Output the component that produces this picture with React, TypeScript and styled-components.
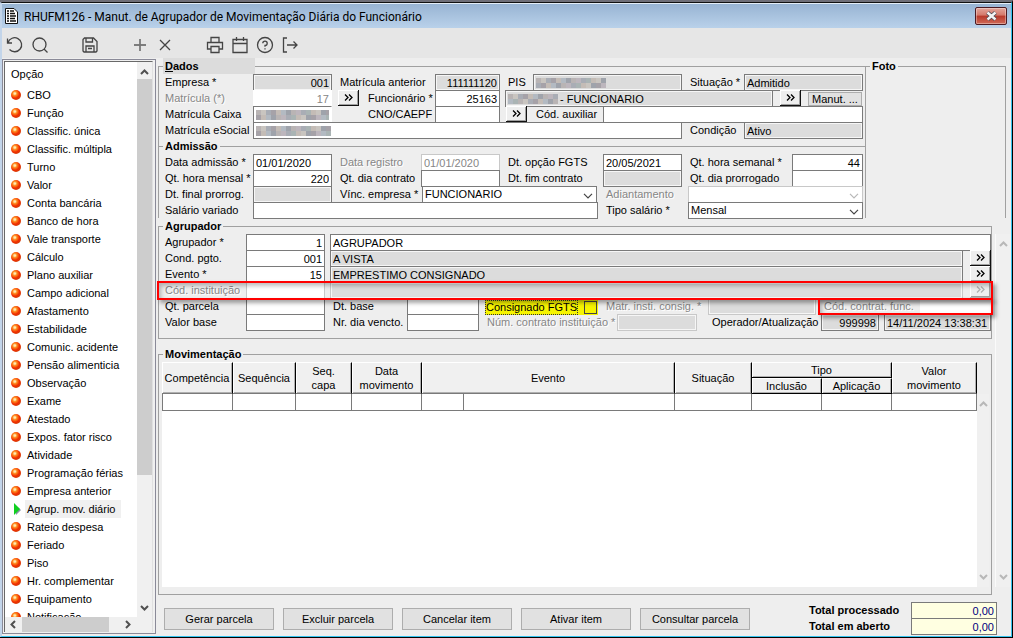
import React from "react";
import styled, { createGlobalStyle, css } from "styled-components";

const LINE = "#a0a0a0";
const EDGE = "#7a7a7a";
const FACE = "#eeeeee";
const SHADE = "#dcdcdc";
const MUTED = "#868686";

const GlobalStyle = createGlobalStyle`
  * { box-sizing: border-box; }
  html, body, #root { height: 100%; }
  body {
    margin: 0;
    background: ${FACE};
    color: #000;
    font: 11px/16px "Liberation Sans", Arial, sans-serif;
    overflow: hidden;
  }
  input, select, button { font: inherit; color: inherit; margin: 0; }
  fieldset { margin: 0; padding: 0; min-width: 0; border: 1px solid ${LINE}; }
`;

const Window = styled.div`
  display: flex;
  flex-direction: column;
  height: 100%;
  border-top: 2px solid #6f6f78;
  border-right: 1px solid #000;
  border-bottom: 1px solid #000;
`;

const Frame = styled.div`
  flex: 1;
  min-height: 0;
  display: flex;
  flex-direction: column;
  border-top: 1px solid #111;
  border-left: 2px solid #c3d5ea;
  border-right: 1px solid #35c3ee;
  border-bottom: 1px solid #35c3ee;
`;

const TitleBar = styled.header`
  display: flex;
  align-items: center;
  height: 25px;
  padding: 0 4px 0 3px;
  gap: 6px;
  border-top: 1px solid #e4eef8;
  background: linear-gradient(#98b4d3, #b9d1ea);
`;

const Title = styled.h1`
  flex: 1;
  margin: 0;
  padding-top: 2px;
  font: 12px/20px Roboto, "Noto Sans", sans-serif;
`;

const CloseButton = styled.button`
  display: grid;
  place-items: center;
  width: 32px;
  height: 18px;
  padding: 0;
  border: 1px solid #4c1a22;
  border-radius: 2px;
  background: linear-gradient(#e3a59b 0%, #d4786a 45%, #b8382a 50%, #cf6a58 100%);
  box-shadow: inset 0 0 0 1px rgba(255, 255, 255, 0.35);
`;

const Toolbar = styled.nav`
  display: flex;
  align-items: center;
  height: 30px;
  padding-top: 4px;
  background: #e6e6e6;
`;

const ToolButton = styled.button<{ $lead?: boolean }>`
  display: grid;
  place-items: center;
  width: 25px;
  height: 26px;
  margin-left: ${(p) => (p.$lead ? "25px" : "0")};
  padding: 0;
  border: 0;
  background: none;
  color: #444;
`;

const Body = styled.div`
  flex: 1;
  min-height: 0;
  display: flex;
`;

const Sidebar = styled.aside`
  display: flex;
  flex-direction: column;
  flex: none;
  width: 154px;
  margin: 1px 0 2px;
  padding: 1px;
  border: 1px solid #8a8a98;
  background: #f0f0f0;
`;

const SidebarInner = styled.div`
  flex: 1;
  min-height: 0;
  display: flex;
  margin-right: 1px;
  border-left: 1px solid #696969;
  border-top: 1px solid #696969;
  border-right: 1px solid #e0e0e0;
`;

const ListColumn = styled.div`
  flex: 1;
  min-width: 0;
  display: flex;
  flex-direction: column;
`;

const ListView = styled.div`
  flex: 1;
  min-height: 0;
  overflow: hidden;
  padding: 3px 0 0 6px;
  background: #fff;
`;

const ListTitle = styled.h2`
  margin: 0 0 3px;
  font: inherit;
  line-height: 18px;
`;

const OptionList = styled.ul`
  margin: 0;
  padding: 0;
  list-style: none;
`;

const Option = styled.li`
  display: flex;
  align-items: center;
  height: 18px;
  gap: 3px;
`;

const OptionLink = styled.a<{ $active?: boolean }>`
  padding: 0 6px 0 2px;
  line-height: 18px;
  color: #000;
  text-decoration: none;
  white-space: nowrap;
  background: ${(p) => (p.$active ? "#f0f0f0" : "none")};
`;

const Bullet = styled.span`
  flex: none;
  width: 10px;
  height: 10px;
  margin-right: 1px;
  border-radius: 50%;
  background: radial-gradient(circle at 38% 35%, #ffe9b0 0 8%, #ff8a1c 24%, #f02c00 52%, #c84a10 85%, #e8a060 100%);
`;

const Marker = styled.svg`
  flex: none;
  width: 11px;
  height: 12px;
`;

const VerticalBar = styled.div<{ $wide?: boolean; $corner?: boolean }>`
  flex: none;
  display: flex;
  flex-direction: column;
  align-items: center;
  justify-content: space-between;
  width: ${(p) => (p.$wide ? "15px" : "12px")};
  padding: 6px 0 ${(p) => (p.$corner ? "20px" : "6px")};
  gap: 2px;
  background: #f0f0f0;
`;

const VerticalThumb = styled.span`
  width: 100%;
  flex: 396;
  background: #cdcdcd;
`;

const VerticalTrack = styled.span`
  flex: 124;
`;

const HorizontalBar = styled.div`
  flex: none;
  display: flex;
  align-items: center;
  height: 15px;
  padding: 0 5px 0 4px;
  gap: 4px;
  background: #f0f0f0;
`;

const HorizontalThumb = styled.span`
  flex: 1;
  height: 100%;
  margin-right: 10px;
  background: #cdcdcd;
`;

const Main = styled.main`
  flex: 1;
  min-width: 0;
  display: flex;
  flex-direction: column;
  padding-left: 2px;
`;

const TopArea = styled.div`
  display: flex;
  padding-right: 5px;
`;

const DataGroup = styled.fieldset`
  flex: 1;
  border-bottom: 0;
`;

const PhotoGroup = styled.fieldset`
  flex: none;
  width: 140px;
  border-left: 0;
  border-bottom: 0;
`;

const Legend = styled.legend<{ $shaded?: boolean }>`
  height: 16px;
  margin-left: 4px;
  padding: 0 2px;
  width: ${(p) => (p.$shaded ? "92px" : "auto")};
  font-weight: bold;
  background: ${(p) => (p.$shaded ? SHADE : FACE)};
`;

const Divider = styled.h2`
  display: flex;
  align-items: center;
  gap: 2px;
  height: 16px;
  margin: 0;
  font: bold 11px/16px "Liberation Sans", Arial, sans-serif;
  &::before, &::after {
    content: "";
    height: 1px;
    background: ${LINE};
  }
  &::before { width: 4px; }
  &::after { flex: 1; }
`;

const Row = styled.div`
  position: relative;
  display: flex;
  align-items: flex-start;
  height: 16px;
  padding: 0 2px 0 6px;
`;

const Label = styled.label<{ $w: number; $muted?: boolean }>`
  flex: none;
  width: ${(p) => p.$w}px;
  white-space: nowrap;
  ${(p) => p.$muted && css`
    color: ${MUTED};
    text-shadow: 1px 1px #fff;
  `}
`;

const Gap = styled.span<{ $w: number }>`
  flex: none;
  width: ${(p) => p.$w}px;
`;

type Kind = "edit" | "shade" | "mutedEdit" | "mutedShade" | "bare";

const Input = styled.input<{ $w?: number; $kind: Kind; $right?: boolean }>`
  flex: ${(p) => (p.$w ? "none" : "1")};
  width: ${(p) => (p.$w ? `${p.$w}px` : "0")};
  min-width: 0;
  height: 17px;
  padding: 1px 2px 0;
  border: 1px solid ${(p) => (p.$kind.startsWith("muted") ? "#c8c8c8" : EDGE)};
  border-radius: 0;
  outline: 0;
  text-align: ${(p) => (p.$right ? "right" : "left")};
  background: ${(p) => (p.$kind === "shade" || p.$kind === "mutedShade" ? SHADE : "#fff")};
  box-shadow: inset 0 0 0 1px ${(p) => (p.$kind.endsWith("hade") ? "#f6f6f6" : "#fff")};
  color: ${(p) => (p.$kind.startsWith("muted") || p.$kind === "bare" ? MUTED : "#000")};
  ${(p) => p.$kind === "bare" && css`border-color: #fff;`}
`;

const Masked = styled.div<{ $w?: number; $shade?: boolean; $bare?: boolean }>`
  flex: ${(p) => (p.$w ? "none" : "1")};
  width: ${(p) => (p.$w ? `${p.$w}px` : "0")};
  display: flex;
  align-items: center;
  gap: 2px;
  height: 17px;
  padding: 0 2px;
  border: 1px solid ${EDGE};
  border-right-color: ${(p) => (p.$bare ? "#fff" : EDGE)};
  background: ${(p) => (p.$shade ? SHADE : "#fff")};
  box-shadow: inset 0 0 0 1px ${(p) => (p.$shade ? "#f6f6f6" : "#fff")};
  white-space: nowrap;
`;

const Select = styled.select<{ $muted?: boolean }>`
  appearance: none;
  flex: 1;
  width: 0;
  height: 17px;
  padding: 0 2px 1px;
  border: 1px solid ${(p) => (p.$muted ? "#c8c8c8" : EDGE)};
  border-radius: 0;
  outline: 0;
  background: #fff;
  line-height: 14px;
  opacity: 1;
`;

const SelectBox = styled.span<{ $w?: number }>`
  position: relative;
  display: flex;
  flex: ${(p) => (p.$w ? "none" : "1")};
  width: ${(p) => (p.$w ? `${p.$w}px` : "auto")};
  svg {
    position: absolute;
    right: 4px;
    top: 7px;
    pointer-events: none;
  }
`;

const LookupButton = styled.button<{ $muted?: boolean }>`
  flex: none;
  display: grid;
  place-items: center;
  width: 21px;
  height: 16px;
  padding: 0;
  border: 0;
  border-right: 1px solid #111;
  border-bottom: 1px solid #111;
  background: ${FACE};
  box-shadow: inset 1px 1px #fff, inset -1px -1px #a0a0a0;
  ${(p) => p.$muted && css`border-color: #b8b8b8;`}
`;

const FlatButton = styled.button<{ $w: number }>`
  flex: none;
  width: ${(p) => p.$w}px;
  height: 14px;
  margin-top: 2px;
  padding: 0;
  border: 1px solid #adadad;
  background: #e1e1e1;
  line-height: 12px;
`;

const Lower = styled.div`
  flex: 1;
  min-height: 0;
  display: flex;
  gap: 4px;
`;

const Groups = styled.div`
  flex: 1;
  min-width: 0;
  display: flex;
  flex-direction: column;
  gap: 7px;
`;

const OuterScroll = styled.div`
  display: flex;
  margin: 16px 0 8px;
  border-left: 1px solid #fafafa;
  margin-left: -1px;
`;

const GroupBox = styled.fieldset`
  padding-bottom: 8px;
  ${Row} { padding-right: 0; }
`;

const Callout = styled.span<{ $inner?: boolean }>`
  position: absolute;
  z-index: 2;
  top: ${(p) => (p.$inner ? "0" : "-1px")};
  bottom: ${(p) => (p.$inner ? "-1px" : "-2px")};
  right: -2px;
  left: ${(p) => (p.$inner ? "auto" : "-2px")};
  width: ${(p) => (p.$inner ? "175px" : "auto")};
  border: 2px solid #f00;
  box-shadow: 3px 3px 4px rgba(0, 0, 0, 0.35), inset 2px 3px 4px rgba(0, 0, 0, 0.25);
  pointer-events: none;
`;

const Highlight = styled.label`
  flex: none;
  display: flex;
  align-items: center;
  justify-content: space-between;
  width: 113px;
  height: 17px;
  padding: 1px 1px 0 0;
  background: #f6f400;
  white-space: nowrap;
  span {
    border: 1px dotted #333;
    line-height: 13px;
  }
  input {
    appearance: none;
    flex: none;
    width: 13px;
    height: 13px;
    border: 1px solid #444;
    background: #f6f400;
  }
`;

const MovementBox = styled.fieldset`
  flex: 1;
  min-height: 0;
  padding: 0 2px 7px 3px;
  ${Legend} { margin-left: 1px; }
`;

const GridArea = styled.div`
  display: flex;
  height: 100%;
`;

const GridSheet = styled.div`
  flex: 1;
  min-width: 0;
  background: #fff;
`;

const GridScroll = styled.div`
  display: flex;
  padding-top: 32px;
`;

const Grid = styled.table`
  width: 100%;
  table-layout: fixed;
  border-collapse: separate;
  border-spacing: 0;
`;

const HeadCell = styled.th`
  height: 16px;
  padding: 0;
  font-weight: normal;
  line-height: 14px;
  border-top: 1px solid #fff;
  border-right: 1px solid #000;
  border-bottom: 1px solid ${EDGE};
  background: #f0f0f0;
  box-shadow: inset 1px 0 #fff, inset -1px -1px #b0b0b0;
`;

const SubHeadCell = styled(HeadCell)`
  border-bottom-color: #000;
`;

const Cell = styled.td`
  height: 17px;
  padding: 0;
  border-right: 1px solid ${EDGE};
  border-bottom: 1px solid ${EDGE};
  &:first-child { border-left: 1px solid ${EDGE}; }
`;

const Footer = styled.footer`
  flex: none;
  display: flex;
  align-items: flex-start;
  height: 41px;
  padding: 7px 14px 0 6px;
  gap: 9px;
  overflow: hidden;
`;

const ActionButton = styled.button`
  width: 110px;
  height: 22px;
  margin-top: 6px;
  padding: 0;
  border: 1px solid #adadad;
  background: #e1e1e1;
`;

const Totals = styled.div`
  margin-left: auto;
`;

const TotalRow = styled.div`
  display: flex;
  height: 16px;
`;

const TotalLabel = styled.label`
  width: 102px;
  font-weight: bold;
`;

const TotalValue = styled.input`
  width: 86px;
  height: 17px;
  padding: 1px 2px 0;
  border: 1px solid ${EDGE};
  background: #ffffe1;
  color: #000080;
  text-align: right;
`;

const Chevron = ({ dir, color = "#505050" }: { dir: "up" | "down" | "left" | "right"; color?: string }) => {
  const d = { up: "M1 6 4.500 2.500 8 6", down: "M1 3 4.500 6.500 8 3", left: "M6 1 2.500 4.500 6 8", right: "M3 1 6.500 4.500 3 8" }[dir];
  return (
    <svg width="9" height="9" viewBox="0 0 9 9" fill="none" stroke={color} strokeWidth="2">
      <path d={d} />
    </svg>
  );
};

const DropArrow = ({ color }: { color: string }) => (
  <svg width="10" height="6" viewBox="0 0 10 6" fill="none" stroke={color} strokeWidth="1.2">
    <path d="M1 .8 5 4.800 9 .8" />
  </svg>
);

const Lookup = ({ label, muted }: { label: string; muted?: boolean }) => (
  <LookupButton type="button" aria-label={label} $muted={muted}>
    <svg width="9" height="7" viewBox="0 0 9 7" fill="none" stroke={muted ? "#b0b0b0" : "#000"} strokeWidth="1.3">
      <path d="M1 .5 4 3.500 1 6.500M5 .5 8 3.500 5 6.500" />
    </svg>
  </LookupButton>
);

type FieldProps = {
  id: string;
  label: string;
  lw: number;
  w?: number;
  value?: string;
  kind?: Kind;
  right?: boolean;
  muted?: boolean;
};

const Field = ({ id, label, lw, w, value = "", kind = "edit", right, muted }: FieldProps) => (
  <>
    <Label htmlFor={id} $w={lw} $muted={muted}>{label}</Label>
    <Input id={id} $w={w} $kind={kind} $right={right} defaultValue={value} />
  </>
);

const SelectField = ({ id, label, lw, w, value, muted }: FieldProps) => (
  <>
    <Label htmlFor={id} $w={lw} $muted={muted}>{label}</Label>
    <SelectBox $w={w}>
      <Select id={id} $muted={muted} disabled={muted} defaultValue={value}>
        <option>{value}</option>
      </Select>
      <DropArrow color={muted ? "#b8b8b8" : "#444"} />
    </SelectBox>
  </>
);

const tones = ["#b9b4b4", "#a9adb5", "#c4bcb6", "#9fa3ab", "#bdb6bd", "#aab4b4", "#c9c5c0", "#a6a2a8", "#b3bac2"];

const Mosaic = ({ cols, label }: { cols: number; label: string }) => (
  <svg width={cols * 5} height="10" role="img" aria-label={label}>
    {Array.from({ length: cols * 2 }, (_, i) => (
      <rect
        key={i}
        x={(i % cols) * 5}
        y={i < cols ? 0 : 5}
        width="5"
        height="5"
        fill={tones[(i * 5 + (i < cols ? 0 : 3) + ((i * i) % 4)) % tones.length]}
      />
    ))}
  </svg>
);

const ToolIcon = ({ d, color = "currentColor", children }: { d: string; color?: string; children?: React.ReactNode }) => (
  <svg width="18" height="18" viewBox="0 0 18 18" fill="none" stroke={color} strokeWidth="1.3">
    <path d={d} />
    {children}
  </svg>
);

const tools = [
  { name: "Desfazer", icon: <ToolIcon d="M1.500 2.500V7H6M2 6.500A7 7 0 1 1 3.500 13.500" /> },
  { name: "Pesquisar", icon: <ToolIcon d="M13 13l3.500 3.500"><circle cx="8.500" cy="8.500" r="6.500" /></ToolIcon> },
  { name: "Salvar", lead: true, icon: <ToolIcon d="M2 3.500 3.500 2H12.500L16 5.500V15L15 16H3L2 15ZM5 2V6H11.500V2M5 16V10H13V16M7 12.500H11" /> },
  { name: "Incluir", lead: true, icon: <ToolIcon color="#777" d="M9 3V15M3 9H15"><path d="M9 3V15M3 9H15" /></ToolIcon> },
  { name: "Excluir", icon: <ToolIcon d="M4 4 14 14M14 4 4 14" /> },
  { name: "Imprimir", lead: true, icon: <ToolIcon d="M5 6.500V1.500H13V6.500M5 13H1.500V6.500H16.500V13H13M5 10.500H13V16.500H5Z" /> },
  { name: "Agenda", icon: <ToolIcon d="M2 3.500H16V16.500H2ZM2 7.500H16M5.500 1V5M12.500 1V5" /> },
  { name: "Ajuda", icon: <ToolIcon d="M6.800 7.300A2.200 2.200 0 1 1 9 9.500V10.800M9 12.200V13.500"><circle cx="9" cy="9" r="7.500" /></ToolIcon> },
  { name: "Sair", icon: <ToolIcon d="M6 2H2.500V16H6M6 9H16M12.500 5.500 16 9 12.500 12.500" /> },
];

const options = [
  "CBO", "Função", "Classific. única", "Classific. múltipla", "Turno", "Valor", "Conta bancária", "Banco de hora",
  "Vale transporte", "Cálculo", "Plano auxiliar", "Campo adicional", "Afastamento", "Estabilidade",
  "Comunic. acidente", "Pensão alimenticia", "Observação", "Exame", "Atestado", "Expos. fator risco", "Atividade",
  "Programação férias", "Empresa anterior", "Agrup. mov. diário", "Rateio despesa", "Feriado", "Piso",
  "Hr. complementar", "Equipamento", "Notificação",
];

const columnWidths = [71, 63, 56, 70, 42, 0, 77, 70, 70, 85];

export default function App() {
  return (
    <>
      <GlobalStyle />
      <Window>
        <Frame>
          <TitleBar>
            <svg width="13" height="16" viewBox="0 0 13 16">
              <path d="M.5.5H9L12.500 4V15.500H.5Z" fill="#fff" stroke="#111" />
              <path d="M2 3H4M5 3H9M2 5.500H4M5 5.500H10M2 8H4M5 8H11M2 10.500H4M5 10.500H10M2 13H4M5 13H11" stroke="#111" strokeWidth="1.300" />
            </svg>
            <Title>RHUFM126 - Manut. de Agrupador de Movimentação Diária do Funcionário</Title>
            <CloseButton type="button" aria-label="Fechar">
              <svg width="13" height="10" viewBox="0 0 13 10">
                <path d="M2.500 1.500 10.500 8.500M10.500 1.500 2.500 8.500" stroke="#4a4a55" strokeWidth="4" />
                <path d="M2.500 1.500 10.500 8.500M10.500 1.500 2.500 8.500" stroke="#f4f4f4" strokeWidth="2.400" />
              </svg>
            </CloseButton>
          </TitleBar>
          <Toolbar aria-label="Ferramentas">
            {tools.map((t) => (
              <ToolButton key={t.name} type="button" aria-label={t.name} $lead={t.lead}>{t.icon}</ToolButton>
            ))}
          </Toolbar>
          <Body>
            <Sidebar>
              <SidebarInner>
                <ListColumn>
                  <ListView>
                    <ListTitle>Opção</ListTitle>
                    <OptionList>
                      {options.map((o) => {
                        const active = o === "Agrup. mov. diário";
                        return (
                          <Option key={o}>
                            {active ? (
                              <Marker viewBox="0 0 11 12">
                                <path d="M4 2 10 7 5 12Z" fill="#8a93a8" />
                                <path d="M3 0 9 6 3 12Z" fill="#10d020" />
                              </Marker>
                            ) : (
                              <Bullet />
                            )}
                            <OptionLink href="#" $active={active}>{o}</OptionLink>
                          </Option>
                        );
                      })}
                    </OptionList>
                  </ListView>
                  <HorizontalBar>
                    <Chevron dir="left" />
                    <HorizontalThumb />
                    <Chevron dir="right" />
                  </HorizontalBar>
                </ListColumn>
                <VerticalBar $wide $corner>
                  <Chevron dir="up" />
                  <VerticalThumb />
                  <VerticalTrack />
                  <Chevron dir="down" />
                </VerticalBar>
              </SidebarInner>
            </Sidebar>

            <Main>
              <TopArea>
                <DataGroup>
                  <Legend $shaded><u>D</u>ados</Legend>
                  <Row>
                    <Field id="empresa" label="Empresa *" lw={88} w={79} value="001" kind="shade" right />
                    <Gap $w={8} />
                    <Field id="matAnt" label="Matrícula anterior" lw={95} w={65} value="111111120" kind="shade" right />
                    <Gap $w={8} />
                    <Label as="span" $w={25}>PIS</Label>
                    <Masked $shade><Mosaic cols={14} label="PIS oculto" /></Masked>
                    <Gap $w={8} />
                    <Field id="situacao" label="Situação *" lw={54} w={119} value="Admitido" kind="shade" />
                  </Row>
                  <Row>
                    <Field id="matricula" label="Matrícula (*)" lw={88} w={79} value="17" kind="bare" right muted />
                    <Gap $w={6} />
                    <Lookup label="Localizar matrícula" />
                    <Gap $w={9} />
                    <Field id="funcionario" label="Funcionário *" lw={67} w={65} value="25163" right />
                    <Gap $w={5} />
                    <Masked $shade><Mosaic cols={10} label="Nome oculto" />- FUNCIONARIO</Masked>
                    <Gap $w={7} />
                    <Lookup label="Localizar funcionário" />
                    <Gap $w={7} />
                    <FlatButton type="button" $w={54}>Manut. ...</FlatButton>
                    <Gap $w={1} />
                  </Row>
                  <Row>
                    <Label as="span" $w={88}>Matrícula Caixa</Label>
                    <Masked $w={79} $bare><Mosaic cols={15} label="Matrícula oculta" /></Masked>
                    <Gap $w={36} />
                    <Field id="cno" label="CNO/CAEPF" lw={67} w={65} />
                    <Gap $w={6} />
                    <Lookup label="Localizar CNO" />
                    <Gap $w={9} />
                    <Field id="codAux" label="Cód. auxiliar" lw={67} />
                  </Row>
                  <Row>
                    <Label as="span" $w={88}>Matrícula eSocial</Label>
                    <Masked><Mosaic cols={15} label="Matrícula oculta" /></Masked>
                    <Gap $w={8} />
                    <Field id="condicao" label="Condição" lw={54} w={119} value="Ativo" kind="shade" />
                  </Row>
                  <Divider>Admissão</Divider>
                  <Row>
                    <Field id="dtAdm" label="Data admissão *" lw={88} w={79} value="01/01/2020" />
                    <Gap $w={8} />
                    <Field id="dtReg" label="Data registro" lw={81} w={79} value="01/01/2020" kind="mutedEdit" muted />
                    <Gap $w={8} />
                    <Field id="dtFgts" label="Dt. opção FGTS" lw={95} value="20/05/2021" />
                    <Gap $w={8} />
                    <Field id="horaSem" label="Qt. hora semanal *" lw={102} w={71} value="44" right />
                  </Row>
                  <Row>
                    <Field id="horaMes" label="Qt. hora mensal *" lw={88} w={79} value="220" right />
                    <Gap $w={8} />
                    <Field id="diaCont" label="Qt. dia contrato" lw={81} w={79} />
                    <Gap $w={8} />
                    <Field id="dtFim" label="Dt. fim contrato" lw={95} kind="shade" />
                    <Gap $w={8} />
                    <Field id="diaPro" label="Qt. dia prorrogado" lw={102} w={71} />
                  </Row>
                  <Row>
                    <Field id="dtFinal" label="Dt. final prorrog." lw={88} w={79} kind="shade" />
                    <Gap $w={8} />
                    <SelectField id="vinc" label="Vínc. empresa *" lw={82} value="FUNCIONARIO" />
                    <Gap $w={9} />
                    <SelectField id="adiant" label="Adiantamento" lw={82} w={175} value="" muted />
                  </Row>
                  <Row>
                    <Field id="salVar" label="Salário variado" lw={88} />
                    <Gap $w={8} />
                    <SelectField id="tipoSal" label="Tipo salário *" lw={82} w={175} value="Mensal" />
                  </Row>
                </DataGroup>
                <PhotoGroup>
                  <Legend>Foto</Legend>
                </PhotoGroup>
              </TopArea>

              <Lower>
                <Groups>
                  <GroupBox>
                    <Legend>Agrupador</Legend>
                    <Row>
                      <Field id="agr" label="Agrupador *" lw={81} w={79} value="1" right />
                      <Gap $w={5} />
                      <Input aria-label="Descrição do agrupador" $kind="edit" defaultValue="AGRUPADOR" />
                    </Row>
                    <Row>
                      <Field id="cond" label="Cond. pgto." lw={81} w={79} value="001" right />
                      <Gap $w={5} />
                      <Input aria-label="Descrição da condição" $kind="shade" defaultValue="A VISTA" />
                      <Gap $w={7} />
                      <Lookup label="Localizar condição" />
                    </Row>
                    <Row>
                      <Field id="evento" label="Evento *" lw={81} w={79} value="15" right />
                      <Gap $w={5} />
                      <Input aria-label="Descrição do evento" $kind="shade" defaultValue="EMPRESTIMO CONSIGNADO" />
                      <Gap $w={7} />
                      <Lookup label="Localizar evento" />
                    </Row>
                    <Row>
                      <Field id="inst" label="Cód. instituição" lw={81} w={79} kind="mutedEdit" muted />
                      <Gap $w={5} />
                      <Input aria-label="Descrição da instituição" $kind="mutedShade" />
                      <Gap $w={7} />
                      <Lookup label="Localizar instituição" muted />
                      <Callout />
                    </Row>
                    <Row>
                      <Field id="parcela" label="Qt. parcela" lw={81} w={79} />
                      <Gap $w={8} />
                      <Field id="dtBase" label="Dt. base" lw={74} w={72} />
                      <Gap $w={6} />
                      <Highlight>
                        <span>Consignado FGTS</span>
                        <input type="checkbox" />
                      </Highlight>
                      <Gap $w={8} />
                      <Field id="matInst" label="Matr. insti. consig. *" lw={102} kind="mutedShade" muted />
                      <Gap $w={8} />
                      <Field id="contrat" label="Cód. contrat. func." lw={96} w={71} kind="bare" muted />
                      <Callout $inner />
                    </Row>
                    <Row>
                      <Field id="valBase" label="Valor base" lw={81} w={79} />
                      <Gap $w={8} />
                      <Field id="diaVenc" label="Nr. dia vencto." lw={74} w={72} />
                      <Gap $w={8} />
                      <Field id="numCont" label="Núm. contrato instituição *" lw={130} kind="mutedShade" muted />
                      <Gap $w={15} />
                      <Field id="oper" label="Operador/Atualização" lw={109} w={58} value="999998" kind="shade" right />
                      <Gap $w={5} />
                      <Input aria-label="Data de atualização" $w={107} $kind="shade" defaultValue="14/11/2024 13:38:31" />
                    </Row>
                  </GroupBox>

                  <MovementBox>
                    <Legend>Movimentação</Legend>
                    <GridArea>
                      <GridSheet>
                        <Grid>
                          <colgroup>
                            {columnWidths.map((w, i) => <col key={i} width={w || undefined} />)}
                          </colgroup>
                          <thead>
                            <tr>
                              <HeadCell rowSpan={2}>Competência</HeadCell>
                              <HeadCell rowSpan={2}>Sequência</HeadCell>
                              <HeadCell rowSpan={2}>Seq.<br />capa</HeadCell>
                              <HeadCell rowSpan={2}>Data<br />movimento</HeadCell>
                              <HeadCell rowSpan={2} colSpan={2}>Evento</HeadCell>
                              <HeadCell rowSpan={2}>Situação</HeadCell>
                              <SubHeadCell colSpan={2}>Tipo</SubHeadCell>
                              <HeadCell rowSpan={2}>Valor<br />movimento</HeadCell>
                            </tr>
                            <tr>
                              <SubHeadCell>Inclusão</SubHeadCell>
                              <SubHeadCell>Aplicação</SubHeadCell>
                            </tr>
                          </thead>
                          <tbody>
                            <tr>{columnWidths.map((_, i) => <Cell key={i} />)}</tr>
                          </tbody>
                        </Grid>
                      </GridSheet>
                      <GridScroll>
                        <VerticalBar>
                          <Chevron dir="up" color="#b8b8b8" />
                          <Chevron dir="down" color="#b8b8b8" />
                        </VerticalBar>
                      </GridScroll>
                    </GridArea>
                  </MovementBox>
                </Groups>
                <OuterScroll>
                  <VerticalBar $wide>
                    <Chevron dir="up" color="#b8b8b8" />
                    <Chevron dir="down" color="#b8b8b8" />
                  </VerticalBar>
                </OuterScroll>
              </Lower>

              <Footer>
                {["Gerar parcela", "Excluir parcela", "Cancelar item", "Ativar item", "Consultar parcela"].map((b) => (
                  <ActionButton key={b} type="button">{b}</ActionButton>
                ))}
                <Totals>
                  <TotalRow>
                    <TotalLabel htmlFor="totProc">Total processado</TotalLabel>
                    <TotalValue id="totProc" defaultValue="0,00" />
                  </TotalRow>
                  <TotalRow>
                    <TotalLabel htmlFor="totAb">Total em aberto</TotalLabel>
                    <TotalValue id="totAb" defaultValue="0,00" />
                  </TotalRow>
                </Totals>
              </Footer>
            </Main>
          </Body>
        </Frame>
      </Window>
    </>
  );
}
